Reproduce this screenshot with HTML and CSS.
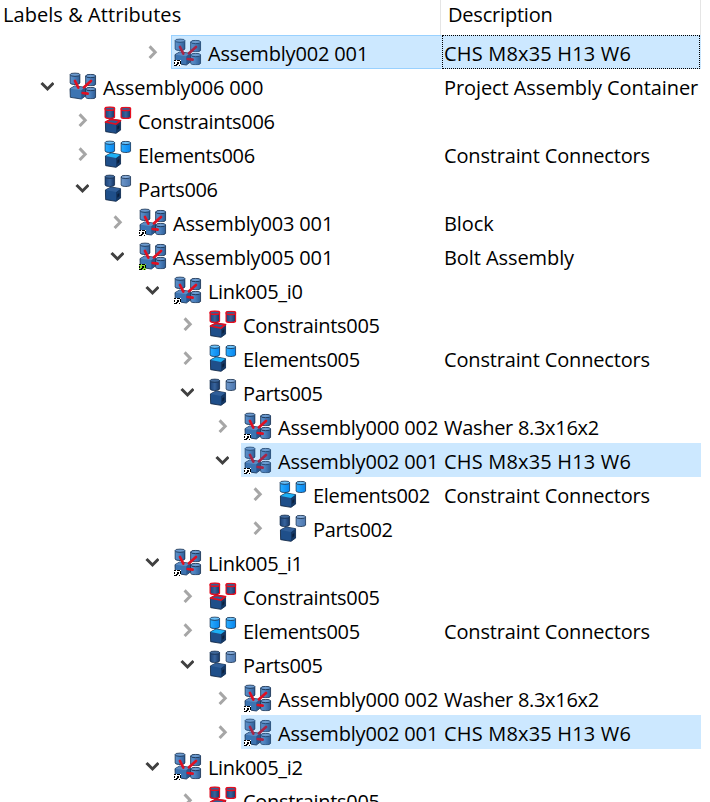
FILE: index.html
```
<!DOCTYPE html>
<html lang="en">
<head>
<meta charset="utf-8">
<title>Labels &amp; Attributes</title>
<link rel="stylesheet" href="styles.css">
</head>
<body>
<svg class="defs" aria-hidden="true">
  <defs>
    <linearGradient id="steel"><stop offset="0" stop-color="#5f92ca"/><stop offset=".45" stop-color="#4a80bd"/><stop offset="1" stop-color="#2f5c94"/></linearGradient>
    <linearGradient id="navy"><stop offset="0" stop-color="#1d4377"/><stop offset=".5" stop-color="#37639c"/><stop offset="1" stop-color="#153461"/></linearGradient>
    <linearGradient id="pale"><stop offset="0" stop-color="#6f98ca"/><stop offset="1" stop-color="#4a75ae"/></linearGradient>
    <linearGradient id="sky"><stop offset="0" stop-color="#2badff"/><stop offset="1" stop-color="#0785ed"/></linearGradient>
    <symbol id="cyl" viewBox="0 0 34 38" preserveAspectRatio="none">
      <path class="body" d="M2 7v25c3 6 27 6 30 0V7z"/>
      <ellipse class="lid" cx="17" cy="7" rx="15" ry="5"/>
    </symbol>
    <symbol id="cube" viewBox="0 0 50 48">
      <path d="M2 12 19 3l29 5v28L34 46 3 41z" fill="#1f4f8a" stroke="#0d2340" stroke-width="2.500"/>
      <path d="M34 18v28l13-10V8z" fill="#143865"/>
      <path class="cubetop" d="M3 12 19 4l28 4-13 10z"/>
      <path d="m38 25 6-4v9l-6 5z" fill="#0b1f3c"/>
    </symbol>
    <symbol id="assembly" viewBox="0 0 84 84">
      <use class="steel" href="#cyl" x="1" y="1" width="34" height="38"/>
      <use class="steel" href="#cyl" x="48" y="5" width="34" height="38"/>
      <path d="M3 50 17 42l32 4v26L37 81 4 76z" fill="#3c74b2" stroke="#142f50" stroke-width="2.500"/>
      <path d="M4 50 17 43l31 4-11 8z" fill="#5c8bc2"/>
      <path d="M37 55v25l12-9V46z" fill="#2a568d"/>
      <use class="steel" href="#cyl" x="48" y="44" width="34" height="38"/>
      <path class="joint" d="m18 27 10 20M66 27 45 46M41 63l15 2"/>
    </symbol>
    <symbol id="badge" viewBox="0 0 7 6">
      <path class="tile" d="M0 0h7v6H0z"/>
      <path d="M0 0h2v1H0zM3 0h3v1H3zM0 2h1v2H0zM6 1h1v3H6zM0 5h3v1H0zM5 5h1v1H5zM3 2h2v2H4v1H2V4h1z" fill="#000"/>
    </symbol>
    <symbol id="group" viewBox="0 0 84 84">
      <use class="first" href="#cyl" x="1" y="1" width="33" height="38"/>
      <use class="second" href="#cyl" x="49" y="2" width="33" height="37"/>
      <use href="#cube" x="2" y="36" width="50" height="48"/>
    </symbol>
    <symbol id="right" viewBox="0 0 14 14"><path d="m4.600 1.400 5.600 5.800-5.600 5.800"/></symbol>
    <symbol id="down" viewBox="0 0 14 14"><path d="m1.500 4 6 6 6-6"/></symbol>
  </defs>
</svg>
<main class="tree">
  <div class="header"><div class="head-label">Labels &amp; Attributes</div><div class="head-desc">Description</div></div>
  <div id="rows"></div>
</main>
<script src="tree.js"></script>
</body>
</html>
```
FILE: styles.css
```
html, body {
  margin: 0;
  height: 100%;
  overflow: hidden;
  background: #fff;
}
body {
  font: 20px/37px "Open Sans", "Noto Sans", sans-serif;
  letter-spacing: -0.32px;
  color: #000;
}
.defs {
  position: absolute;
  width: 0;
  height: 0;
}
.tree { width: 701px; }
.header {
  display: grid;
  grid-template-columns: 441px 260px;
  height: 35px;
  line-height: 29px;
}
.head-label, .head-desc {
  box-sizing: border-box;
  border-right: 1px solid #e5e5e5;
}
.head-label { padding-left: 3px; letter-spacing: 0.06px; }
.head-desc { padding-left: 7px; letter-spacing: -0.2px; }
.row {
  display: grid;
  grid-template-columns: 441px 260px;
  height: 34px;
}
.label {
  display: flex;
  align-items: center;
  height: 34px;
  padding-left: calc(40px + var(--level) * 35px);
}
.chevron {
  flex: none;
  width: 14px;
  height: 14px;
  margin-right: 12px;
  fill: none;
  stroke: #a6a6a6;
  stroke-width: 3;
}
.chevron.open { stroke: #404040; }
.item {
  display: flex;
  align-items: center;
  flex: 1;
  box-sizing: border-box;
  height: 34px;
  padding-left: 3px;
  white-space: nowrap;
}
.name { padding-top: 3px; line-height: 34px; }
.name.wide { letter-spacing: -0.16px; }
.icon {
  position: relative;
  flex: none;
  width: 28px;
  height: 28px;
  margin-right: 6px;
}
.icon svg { display: block; width: 28px; height: 28px; }
.icon .link {
  position: absolute;
  left: 0;
  bottom: 0;
  width: 7px;
  height: 6px;
}
.tile { fill: var(--tile, #fff); }
.green { --tile: #8be234; }
.desc {
  box-sizing: border-box;
  height: 34px;
  padding-left: 3px;
  white-space: nowrap;
  letter-spacing: -0.08px;
}
.desc.code { letter-spacing: 0.18px; }
.desc.connectors { letter-spacing: -0.16px; }
.desc.size { letter-spacing: -0.3px; }
.selected .item, .selected .desc { background: #cce8ff; }
.selected { --joint: #a82546; --edge: #1d426b; }
.current .item {
  border: 1px solid #99d1ff;
  border-right: 0;
  padding-left: 2px;
}
.current .desc {
  margin-left: 1px;
  border: 1px dotted #000;
  padding-left: 1px;
  line-height: 35px;
  width: 258px;
}
.current { background: linear-gradient(#cce8ff, #cce8ff) 441px 0 / 260px 34px no-repeat; }
.joint {
  fill: none;
  stroke: var(--joint, #df1022);
  stroke-width: 8px;
  stroke-linecap: round;
}
.body { fill: var(--fill); stroke: var(--edge, #142b49); stroke-width: var(--line, 2.5px); }
.lid { fill: var(--lid); stroke: var(--edge, #142b49); stroke-width: var(--line, 2.5px); }
.steel { --fill: url(#steel); --lid: #6c9bd0; }
.cubetop { fill: var(--top, #2c629e); stroke: var(--topedge, none); stroke-width: 5px; }
.constraints { --top: #2d5f99; --topedge: #df1022; }
.constraints, .constraints .first, .constraints .second {
  --fill: url(#navy); --lid: #365f94; --edge: #e50f20; --line: 4.5px;
}
.elements { --fill: url(#sky); --lid: #68c1fa; --top: #1db0f5; }
.parts { --top: #315f99; --fill: url(#navy); --lid: #416a9d; }
.second { --fill: var(--fill2); --lid: var(--lid2); }
.elements { --fill2: url(#sky); --lid2: #68c1fa; }
.constraints { --fill2: url(#navy); --lid2: #365f94; }
.parts { --fill2: url(#pale); --lid2: #84a9d6; }
```
FILE: tree.js
```
const C = "Constraint Connectors";
const B = "CHS M8x35 H13 W6";
const W = "Washer 8.3x16x2";
const spacing = { [C]: "connectors", [B]: "code", [W]: "size" };
// level, state, icon, label, description, extra classes
const rows = [
  [3, "right", "link", "Assembly002 001", B, "selected current"],
  [0, "down", "assembly", "Assembly006 000", "Project Assembly Container"],
  [1, "right", "constraints", "Constraints006", ""],
  [1, "right", "elements", "Elements006", C],
  [1, "down", "parts", "Parts006", ""],
  [2, "right", "link", "Assembly003 001", "Block"],
  [2, "down", "green", "Assembly005 001", "Bolt Assembly"],
  [3, "down", "link", "Link005_i0", ""],
  [4, "right", "constraints", "Constraints005", ""],
  [4, "right", "elements", "Elements005", C],
  [4, "down", "parts", "Parts005", ""],
  [5, "right", "link", "Assembly000 002", W],
  [5, "down", "link", "Assembly002 001", B, "selected"],
  [6, "right", "elements", "Elements002", C],
  [6, "right", "parts", "Parts002", ""],
  [3, "down", "link", "Link005_i1", ""],
  [4, "right", "constraints", "Constraints005", ""],
  [4, "right", "elements", "Elements005", C],
  [4, "down", "parts", "Parts005", ""],
  [5, "right", "link", "Assembly000 002", W],
  [5, "right", "link", "Assembly002 001", B, "selected"],
  [3, "down", "link", "Link005_i2", ""],
  [4, "right", "constraints", "Constraints005", ""]
];
const groups = ["constraints", "elements", "parts"];
document.getElementById("rows").innerHTML = rows.map(([level, state, icon, label, desc, cls = ""]) => {
  const shape = groups.includes(icon) ? "group" : "assembly";
  const badge = icon === "link" || icon === "green" ? '<svg class="link"><use href="#badge"/></svg>' : "";
  const wide = label.startsWith("Assembly") ? "wide" : "";
  return `<div class="row ${cls}"><div class="label" style="--level:${level}">
    <svg class="chevron ${state === "down" ? "open" : ""}"><use href="#${state}"/></svg>
    <div class="item"><span class="icon ${icon}"><svg><use href="#${shape}"/></svg>${badge}</span><span class="name ${wide}">${label}</span></div>
  </div><div class="desc ${spacing[desc] || ""}">${desc}</div></div>`;
}).join("");
```
